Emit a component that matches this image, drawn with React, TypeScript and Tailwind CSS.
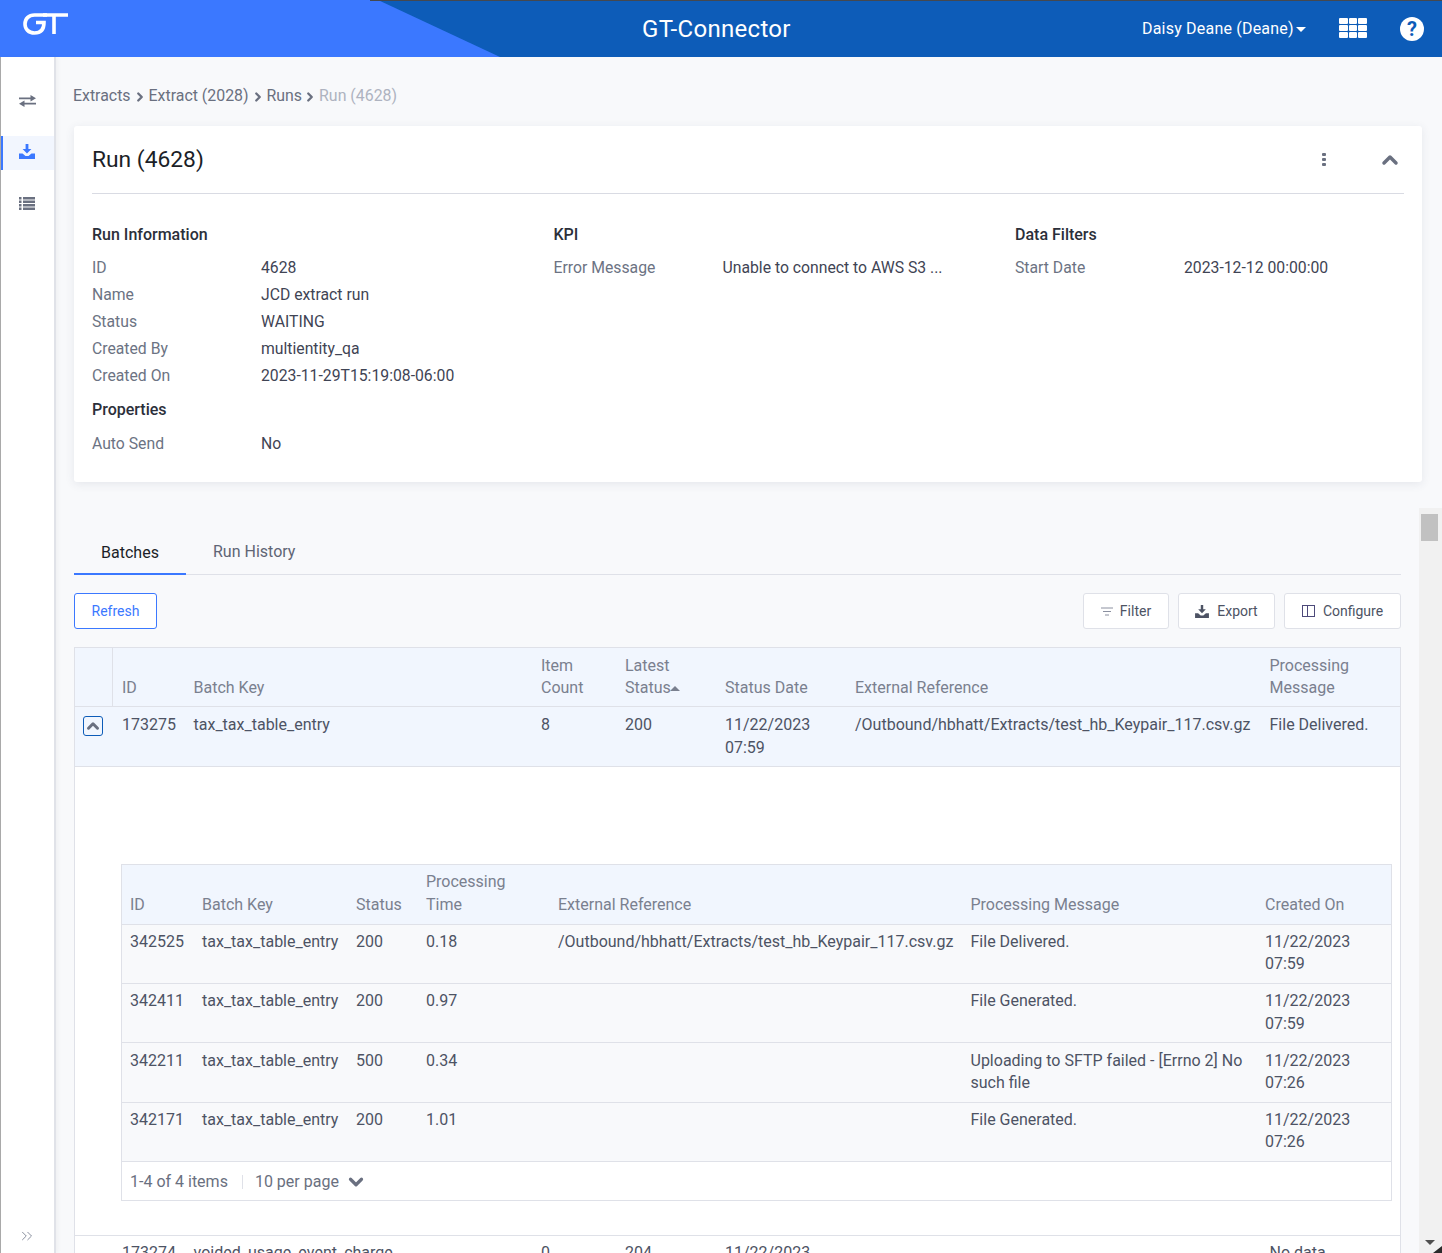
import { ChevronDown, ChevronRight, ChevronUp, ChevronsRight } from "lucide-react";

const batchCols = "grid grid-cols-[37px_71.5px_347.5px_84px_100px_130px_414.5px_1fr]";
const runCols = "grid grid-cols-[72px_154px_70px_132px_412.5px_294.5px_1fr]";

const runRows = [
  { id: "342525", status: "200", time: "0.18", ref: "/Outbound/hbhatt/Extracts/test_hb_Keypair_117.csv.gz", msg: "File Delivered.", date: "07:59" },
  { id: "342411", status: "200", time: "0.97", ref: "", msg: "File Generated.", date: "07:59" },
  { id: "342211", status: "500", time: "0.34", ref: "", msg: "Uploading to SFTP failed - [Errno 2] No such file", date: "07:26" },
  { id: "342171", status: "200", time: "1.01", ref: "", msg: "File Generated.", date: "07:26" },
];

const infoRows = [
  ["ID", "4628"],
  ["Name", "JCD extract run"],
  ["Status", "WAITING"],
  ["Created By", "multientity_qa"],
  ["Created On", "2023-11-29T15:19:08-06:00"],
];

function InfoRow({ label, value }: { label: string; value: string }) {
  return (
    <div className="flex h-[27px] items-center text-[15.75px]">
      <div className="w-[169px] text-[#6c7383]">{label}</div>
      <div className="text-[#3f4454]">{value}</div>
    </div>
  );
}

function DownloadIcon({ className }: { className: string }) {
  return (
    <svg viewBox="0 0 16 15" className={className} fill="currentColor">
      <path d="M6.6 0h2.8v5h3L8 9.6 3.600 5h3z" />
      <path d="M0 9.500h3.500L6.500 12h3l3-2.500H16V15H0z" />
    </svg>
  );
}

export default function App() {
  return (
    <div className="relative h-[1253px] w-[1442px] overflow-hidden bg-[#f8f9fb] font-['Roboto',sans-serif] text-[16px] leading-[22.4px] text-[#4d5364]">
      {/* Header */}
      <header className="relative flex h-[57px] items-center bg-[#0d5cb8] text-white">
        <div className="absolute inset-0 bg-[#3b78ff] [clip-path:polygon(0_0,378px_0,500px_57px,0_57px)]" />
        <div className="absolute left-[370px] right-0 top-0 h-[1px] bg-[#44484f]" />
        <svg viewBox="0 0 45 22" className="absolute left-[23px] top-[13px] h-[22px] w-[45px]" fill="none" stroke="white" strokeWidth="3.6">
          <path d="M24 2H11.500C5.500 2 2 6 2 11s3.500 9 9.500 9c6 0 9.500-3.500 9.500-10.500h-8" />
          <path d="M20 2h25M31 2v19" />
        </svg>
        <div className="absolute left-[642px] top-[13px] text-[24px] leading-[32px] tracking-[0.3px]">GT-Connector</div>
        <div className="absolute left-[1142px] top-[18px] flex items-center tracking-[0.2px]">
          <span>Daisy Deane (Deane)</span>
          <span className="ml-[2px] h-0 w-0 border-x-[5px] border-t-[5px] border-x-transparent border-t-white" />
        </div>
        <div className="absolute left-[1339px] top-[18px] grid grid-cols-3 gap-[1px]">
          {Array.from({ length: 9 }).map((_, i) => (
            <span key={i} className="h-[6px] w-[8.500px] rounded-[1px] bg-white" />
          ))}
        </div>
        <div className="absolute left-[1400px] top-[17px] flex h-[24px] w-[24px] items-center justify-center rounded-full bg-white text-[20px] font-bold text-[#0d5cb8]">
          ?
        </div>
      </header>

      <div className="flex h-[1196px]">
        {/* Sidebar */}
        <aside className="relative z-10 h-full w-[56px] shrink-0 border-l border-l-[#a9a9a9] border-r-2 border-r-[#e0e2e8] bg-white text-[#6a7080] shadow-[2px_0_4px_rgba(0,0,0,0.04)]">
          <div className="flex h-[79px] items-end justify-center pb-[29px]">
            <svg viewBox="0 0 17 12" className="h-[12px] w-[17px]" fill="currentColor">
              <path d="M11.500 0 17 3.200l-5.500 3.200V4.200H0V2.400h11.500zM5.500 5.600v2.200H17v1.800H5.500V12L0 8.800z" />
            </svg>
          </div>
          <div className="flex h-[34px] items-center justify-center border-l-2 border-l-[#3b78ff] bg-[#f2f6fe] pb-[4px] pr-[4px] text-[#3b78ff]">
            <DownloadIcon className="h-[15px] w-[16px]" />
          </div>
          <div className="flex flex-col items-center pr-[2px] pt-[27px]">
            <svg viewBox="0 0 16 13" className="h-[13px] w-[16px]" fill="currentColor">
              <path d="M0 0h2.500v2.400H0zM4 0h12v2.400H4zM0 3.500h2.500v2.400H0zM4 3.500h12v2.400H4zM0 7h2.500v2.400H0zM4 7h12v2.400H4zM0 10.500h2.500v2.400H0zM4 10.500h12v2.400H4z" />
            </svg>
          </div>
          <ChevronsRight className="absolute left-[17px] top-[1170px] h-[18px] w-[18px] text-[#7d8394]" strokeWidth={1.2} />
        </aside>

        {/* Content */}
        <main className="min-w-0 flex-1 pl-[18px] pt-[28px]">
          <nav className="flex h-[23px] items-center text-[15.9px] text-[#6a7080]">
            <span className="-ml-[1px]">Extracts</span>
            <ChevronRight className="mx-[2px] h-[14px] w-[14px]" strokeWidth={4} />
            <span>Extract (2028)</span>
            <ChevronRight className="mx-[2px] h-[14px] w-[14px]" strokeWidth={4} />
            <span>Runs</span>
            <ChevronRight className="ml-[1px] mr-[2px] h-[14px] w-[14px]" strokeWidth={4} />
            <span className="text-[#aeb3c0]">Run (4628)</span>
          </nav>

          {/* Run card */}
          <section className="mt-[18px] h-[356px] w-[1348px] rounded-[3px] bg-white px-[18px] shadow-[0_2px_10px_rgba(60,70,100,0.1)]">
            <div className="flex h-[68px] items-center justify-between border-b border-[#d9dbe3]">
              <h1 className="text-[22.8px] leading-[32px] text-[#1c1f28]">Run (4628)</h1>
              <div className="flex items-center text-[#6a7080]">
                <div className="flex flex-col gap-[1.500px]">
                  <span className="h-[3.500px] w-[4px] rounded-[1px] bg-[#6a7080]" />
                  <span className="h-[3.500px] w-[4px] rounded-[1px] bg-[#6a7080]" />
                  <span className="h-[3.500px] w-[4px] rounded-[1px] bg-[#6a7080]" />
                </div>
                <ChevronUp className="ml-[52px] mr-[2px] h-[24px] w-[24px]" strokeWidth={3.500} />
              </div>
            </div>
            <div className="grid grid-cols-[461.500px_461.500px_1fr] pt-[27px]">
              <div>
                <h2 className="mb-[7px] h-[27px] font-medium leading-[27px] text-[#2b2f3a]">Run Information</h2>
                {infoRows.map(([label, value]) => (
                  <InfoRow key={label} label={label} value={value} />
                ))}
                <h2 className="mt-[6px] h-[27px] font-medium leading-[27px] text-[#2b2f3a]">Properties</h2>
                <div className="mt-[8px]">
                  <InfoRow label="Auto Send" value="No" />
                </div>
              </div>
              <div>
                <h2 className="mb-[7px] h-[27px] font-medium leading-[27px] text-[#2b2f3a]">KPI</h2>
                <InfoRow label="Error Message" value="Unable to connect to AWS S3 ..." />
              </div>
              <div>
                <h2 className="mb-[7px] h-[27px] font-medium leading-[27px] text-[#2b2f3a]">Data Filters</h2>
                <InfoRow label="Start Date" value="2023-12-12 00:00:00" />
              </div>
            </div>
          </section>

          {/* Tabs */}
          <div className="mt-[46px] w-[1327px]">
            <div className="flex h-[47px] border-b border-[#dfe1e8]">
              <div className="h-[47px] w-[112px] border-b-2 border-[#3b78ff] pt-[14px] text-center text-[#1c1f28]">Batches</div>
              <div className="ml-[27px] pt-[13px] text-[#5f6575]">Run History</div>
            </div>

            <div className="mt-[18px] flex items-center">
              <button className="h-[36px] w-[83px] rounded-[3px] border border-[#3b78ff] bg-white text-[14px] text-[#3b78ff]">Refresh</button>
              <div className="ml-auto flex gap-[9px] text-[14px]">
                <button className="flex h-[36px] w-[86px] items-center justify-center gap-[7px] rounded-[3px] border border-[#dfe1e8] bg-white">
                  <svg viewBox="0 0 12 9" className="h-[9px] w-[12px]" stroke="#8b90a0" strokeWidth="1">
                    <path d="M0 1h12M2 4.500h8M4 8h4" />
                  </svg>
                  Filter
                </button>
                <button className="flex h-[36px] w-[97px] items-center justify-center gap-[8px] rounded-[3px] border border-[#dfe1e8] bg-white">
                  <DownloadIcon className="h-[13px] w-[14px] text-[#4d5364]" />
                  Export
                </button>
                <button className="flex h-[36px] w-[117px] items-center justify-center gap-[8px] rounded-[3px] border border-[#dfe1e8] bg-white">
                  <span className="flex h-[12px] w-[13px] border border-[#4d4a7a]">
                    <span className="h-full w-1/2 border-r border-[#4d4a7a]" />
                  </span>
                  Configure
                </button>
              </div>
            </div>

            {/* Batches table */}
            <div className="mt-[18px] border-x border-t border-[#dfe1e8] bg-white">
              <div className={`${batchCols} h-[59px] border-b border-[#dfe1e8] bg-[#f1f6fe] leading-[22px] text-[#7a808f]`}>
                <div className="-mr-[1px] border-r border-[#dfe1e8]" />
                <div className="self-end px-[10px] pb-[7.5px]">ID</div>
                <div className="self-end px-[10px] pb-[7.5px]">Batch Key</div>
                <div className="self-end px-[10px] pb-[7.5px]">Item Count</div>
                <div className="relative self-end px-[10px] pb-[7.5px]">
                  Latest Status
                  <span className="absolute left-[55px] top-[31px] h-0 w-0 border-x-[5px] border-b-[5px] border-x-transparent border-b-[#7a808f]" />
                </div>
                <div className="self-end px-[10px] pb-[7.5px]">Status Date</div>
                <div className="self-end px-[10px] pb-[7.5px]">External Reference</div>
                <div className="self-end px-[10px] pb-[7.5px]">Processing Message</div>
              </div>
              <div className={`${batchCols} h-[60px] border-b border-[#dfe1e8] bg-[#f1f6fe] pt-[7.4px]`}>
                <div className="pl-[8px] pt-[2px]">
                  <div className="flex h-[20px] w-[20px] items-center justify-center rounded-[3px] border border-[#0d5cb8]">
                    <ChevronUp className="h-[18px] w-[18px] text-[#6a7080]" strokeWidth={4} />
                  </div>
                </div>
                <div className="px-[10px]">173275</div>
                <div className="px-[10px]">tax_tax_table_entry</div>
                <div className="px-[10px]">8</div>
                <div className="px-[10px]">200</div>
                <div className="px-[10px]">11/22/2023 07:59</div>
                <div className="whitespace-nowrap px-[10px]">/Outbound/hbhatt/Extracts/test_hb_Keypair_117.csv.gz</div>
                <div className="whitespace-nowrap px-[10px]">File Delivered.</div>
              </div>

              {/* Expanded row */}
              <div className="h-[469px] border-b border-[#dfe1e8] pl-[46px] pr-[8px] pt-[97px]">
                <div className="border border-[#dfe1e8]">
                  <div className={`${runCols} h-[59.6px] border-b border-[#dfe1e8] bg-[#f1f6fe] text-[#7a808f]`}>
                    {["ID", "Batch Key", "Status", "Processing Time", "External Reference", "Processing Message", "Created On"].map((h) => (
                      <div key={h} className="self-end px-[8px] pb-[7.6px]">{h}</div>
                    ))}
                  </div>
                  {runRows.map((r) => (
                    <div key={r.id} className={`${runCols} h-[59.4px] border-b border-[#dfe1e8] bg-[#f8f9fb] pt-[6.3px]`}>
                      <div className="px-[8px]">{r.id}</div>
                      <div className="whitespace-nowrap px-[8px]">tax_tax_table_entry</div>
                      <div className="px-[8px]">{r.status}</div>
                      <div className="px-[8px]">{r.time}</div>
                      <div className="whitespace-nowrap px-[8px]">{r.ref}</div>
                      <div className="px-[8px]">{r.msg}</div>
                      <div className="px-[8px]">
                        11/22/2023
                        <br />
                        {r.date}
                      </div>
                    </div>
                  ))}
                  <div className="flex h-[37.4px] items-center pl-[8px] pt-[2px] text-[#6a7080]">
                    <span>1-4 of 4 items</span>
                    <span className="ml-[14px] mr-[12px] h-[14px] w-[1px] bg-[#dfe1e8]" />
                    <span>10 per page</span>
                    <ChevronDown className="ml-[6px] h-[22px] w-[22px]" strokeWidth={3.500} />
                  </div>
                </div>
              </div>

              <div className={`${batchCols} pt-[6px]`}>
                <div className="pl-[8px] pt-[8px]">
                  <ChevronDown className="h-[18px] w-[18px] text-[#6a7080]" strokeWidth={4} />
                </div>
                <div className="px-[10px]">173274</div>
                <div className="px-[10px]">voided_usage_event_charge</div>
                <div className="px-[10px]">0</div>
                <div className="px-[10px]">204</div>
                <div className="px-[10px]">11/22/2023</div>
                <div className="px-[10px]" />
                <div className="px-[10px]">No data</div>
              </div>
            </div>
          </div>
        </main>
      </div>

      {/* Scrollbar */}
      <div className="absolute left-[1419px] top-[508px] h-[745px] w-[23px] bg-[#f1f1f1]">
        <div className="ml-[2px] mt-[6px] h-[27px] w-[17px] bg-[#c1c1c1]" />
        <span className="absolute bottom-[8px] left-[6px] h-0 w-0 border-x-[5px] border-t-[5px] border-x-transparent border-t-[#505050]" />
        <div className="absolute bottom-0 right-0 h-[7px] w-[9px] bg-[#2b2b2b] [clip-path:polygon(100%_0,100%_100%,0_100%)]" />
      </div>
    </div>
  );
}
